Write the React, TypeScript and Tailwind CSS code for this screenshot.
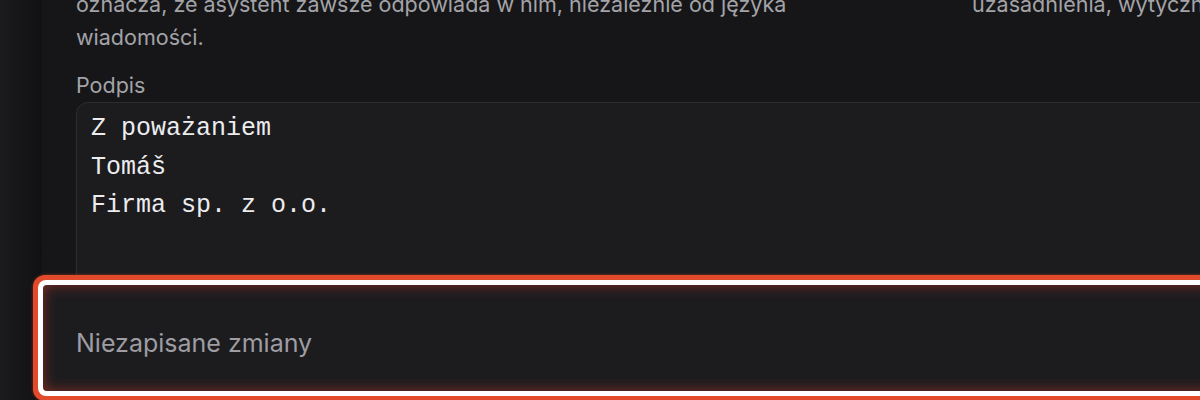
import React from "react";

export default function App() {
  return (
    <div
      className="relative flex h-[400px] w-[1200px] overflow-hidden bg-[#161618]"
      style={{ fontFamily: "Inter, 'Noto Sans', sans-serif" }}
    >
      <div className="h-full w-[42px] shrink-0 bg-gradient-to-r from-[#1b1b1d] to-[#111113]" />
      <div className="flex min-w-0 flex-1 flex-col pl-[34px]">
        <div className="-mt-[12px] grid grid-cols-[770px_1fr] gap-[126px] text-[21.5px] leading-[33px] text-[#a3a3a8]">
          <p>oznacza, że asystent zawsze odpowiada w nim, niezależnie od języka wiadomości.</p>
          <p className="overflow-hidden whitespace-nowrap">uzasadnienia, wytyczne i przykłady</p>
        </div>
        <label className="mt-[17px] text-[21.5px] leading-[28px] text-[#a3a3a8]">Podpis</label>
        <div className="mt-[3px] -mr-[40px] h-[260px] rounded-[12px] border border-[#2c2c31] bg-[#1c1c1f] px-[14px] pt-[7px]">
          <pre
            className="text-[25px] leading-[38.5px] text-[#ececef]"
            style={{ fontFamily: "'Liberation Mono', 'DejaVu Sans Mono', monospace" }}
          >
            {"Z poważaniem\nTomáš\nFirma sp. z o.o."}
          </pre>
        </div>
      </div>
      <div className="absolute left-[33px] top-[275px] -right-[30px] h-[126px] rounded-[12px] bg-[#e24a2c] p-[5px] shadow-[0_0_3px_rgba(226,74,44,0.6)]">
        <div className="h-full rounded-[8px] bg-white p-[5px]">
          <div className="flex h-full items-start rounded-[4px] bg-[#1c1c1f] pl-[33px] pt-[43px] shadow-[inset_0_0_14px_rgba(200,60,40,0.6)]">
            <span className="text-[25px] leading-[30px] text-[#9d9da3]">Niezapisane zmiany</span>
          </div>
        </div>
      </div>
    </div>
  );
}
